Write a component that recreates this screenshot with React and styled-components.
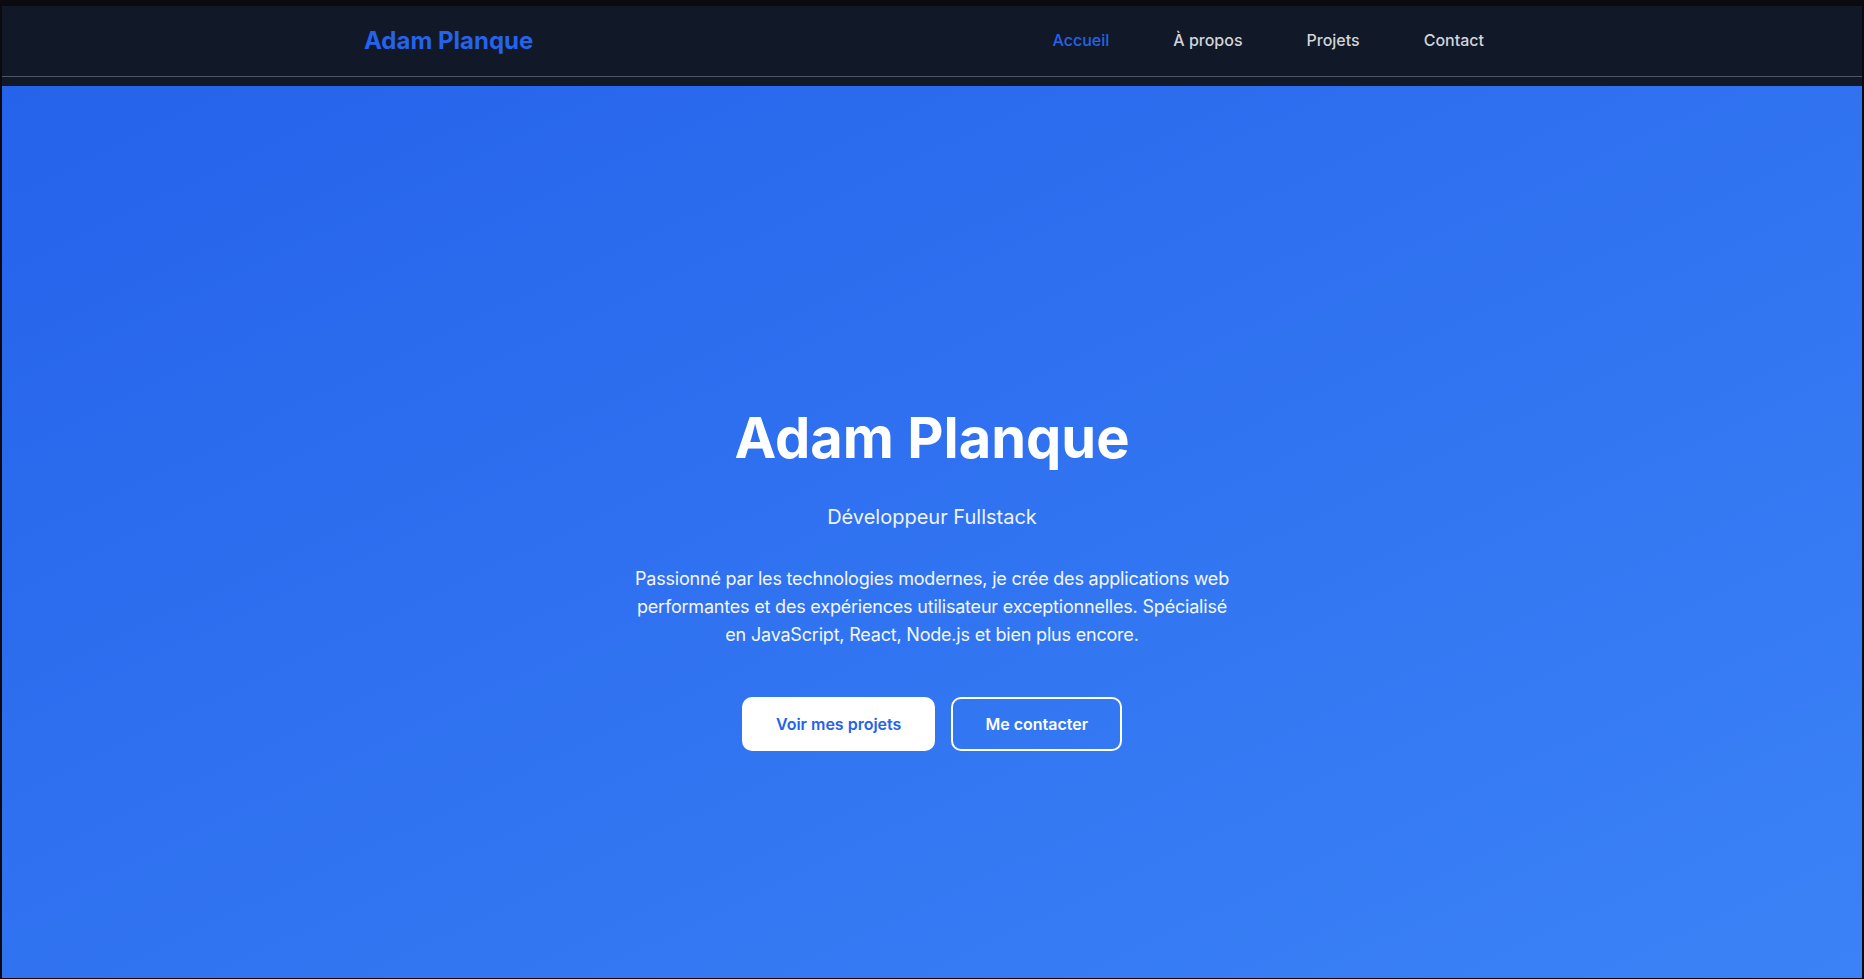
import styled, { createGlobalStyle } from "styled-components";

const GlobalStyle = createGlobalStyle`
    html, body {
        margin: 0;
        padding: 0;
        height: 100%;
        background-color: #0a0a0f;
        font-family: Inter, "Noto Sans", sans-serif;
    }
    * {
        box-sizing: border-box;
    }
`

export default function App() {

    const links = ['Accueil', 'À propos', 'Projets', 'Contact']

    return (
        <Frame>
            <GlobalStyle />

            <Header>
                <NavBar>
                    <Logo>Adam Planque</Logo>
                    <Links>
                        {links.map((link, i) => (
                            <NavLink key={link} $active={i === 0}>{link}</NavLink>
                        ))}
                    </Links>
                </NavBar>
            </Header>

            <Hero>
                <Content>
                    <Title>Adam Planque</Title>
                    <Subtitle>Développeur Fullstack</Subtitle>
                    <Description>
                        Passionné par les technologies modernes, je crée des applications web
                        performantes et des expériences utilisateur exceptionnelles. Spécialisé
                        en JavaScript, React, Node.js et bien plus encore.
                    </Description>
                    <Buttons>
                        <Button $primary>Voir mes projets</Button>
                        <Button>Me contacter</Button>
                    </Buttons>
                </Content>
            </Hero>
        </Frame>
    )
}

const Frame = styled.div`
    display: flex;
    flex-direction: column;
    height: 100vh;
    padding: 6px 2px 1px 2px;
    background-color: #0a0a0f;
`

const Header = styled.header`
    height: 80px;
    background-color: #111827;
    flex-shrink: 0;
`

const NavBar = styled.nav`
    height: 71px;
    padding-bottom: 2px;
    border-bottom: 1px solid #4b5563;

    display: flex;
    justify-content: space-between;
    align-items: center;
    padding-left: calc((100% - 1136px) / 2);
    padding-right: calc((100% - 1136px) / 2);
`

const Logo = styled.div`
    font-size: 24px;
    font-weight: 700;
    color: #2563eb;
`

const Links = styled.div`
    display: flex;
    align-items: center;
    gap: 32px;
`

const NavLink = styled.a`
    padding: 0 16px;
    font-size: 16px;
    font-weight: 500;
    color: ${props => props.$active ? '#2563eb' : '#d1d5db'};
    cursor: pointer;
`

const Hero = styled.section`
    flex: 1;
    display: flex;
    align-items: center;
    justify-content: center;
    padding-top: 95px;
    background: linear-gradient(to bottom right, #2563eb, #3b82f6);
`

const Content = styled.div`
    display: flex;
    flex-direction: column;
    align-items: center;
    text-align: center;
    color: #ffffff;
`

const Title = styled.h1`
    margin: 0;
    font-size: 56px;
    line-height: 60px;
    font-weight: 700;
`

const Subtitle = styled.p`
    margin: 35px 0 0 0;
    font-size: 20px;
    line-height: 28px;
    color: #eef4ff;
`

const Description = styled.p`
    margin: 34px 0 0 0;
    max-width: 612px;
    font-size: 18px;
    line-height: 28px;
    letter-spacing: -0.2px;
    color: #f3f7ff;
`

const Buttons = styled.div`
    display: flex;
    gap: 16px;
    margin-top: 48px;
`

const Button = styled.button`
    padding: 14px 32px;
    border: 2px solid #ffffff;
    border-radius: 10px;
    font-family: inherit;
    font-size: 16px;
    line-height: 22px;
    font-weight: 600;
    background-color: ${props => props.$primary ? '#ffffff' : 'transparent'};
    color: ${props => props.$primary ? '#2563eb' : '#ffffff'};
    cursor: pointer;
`
